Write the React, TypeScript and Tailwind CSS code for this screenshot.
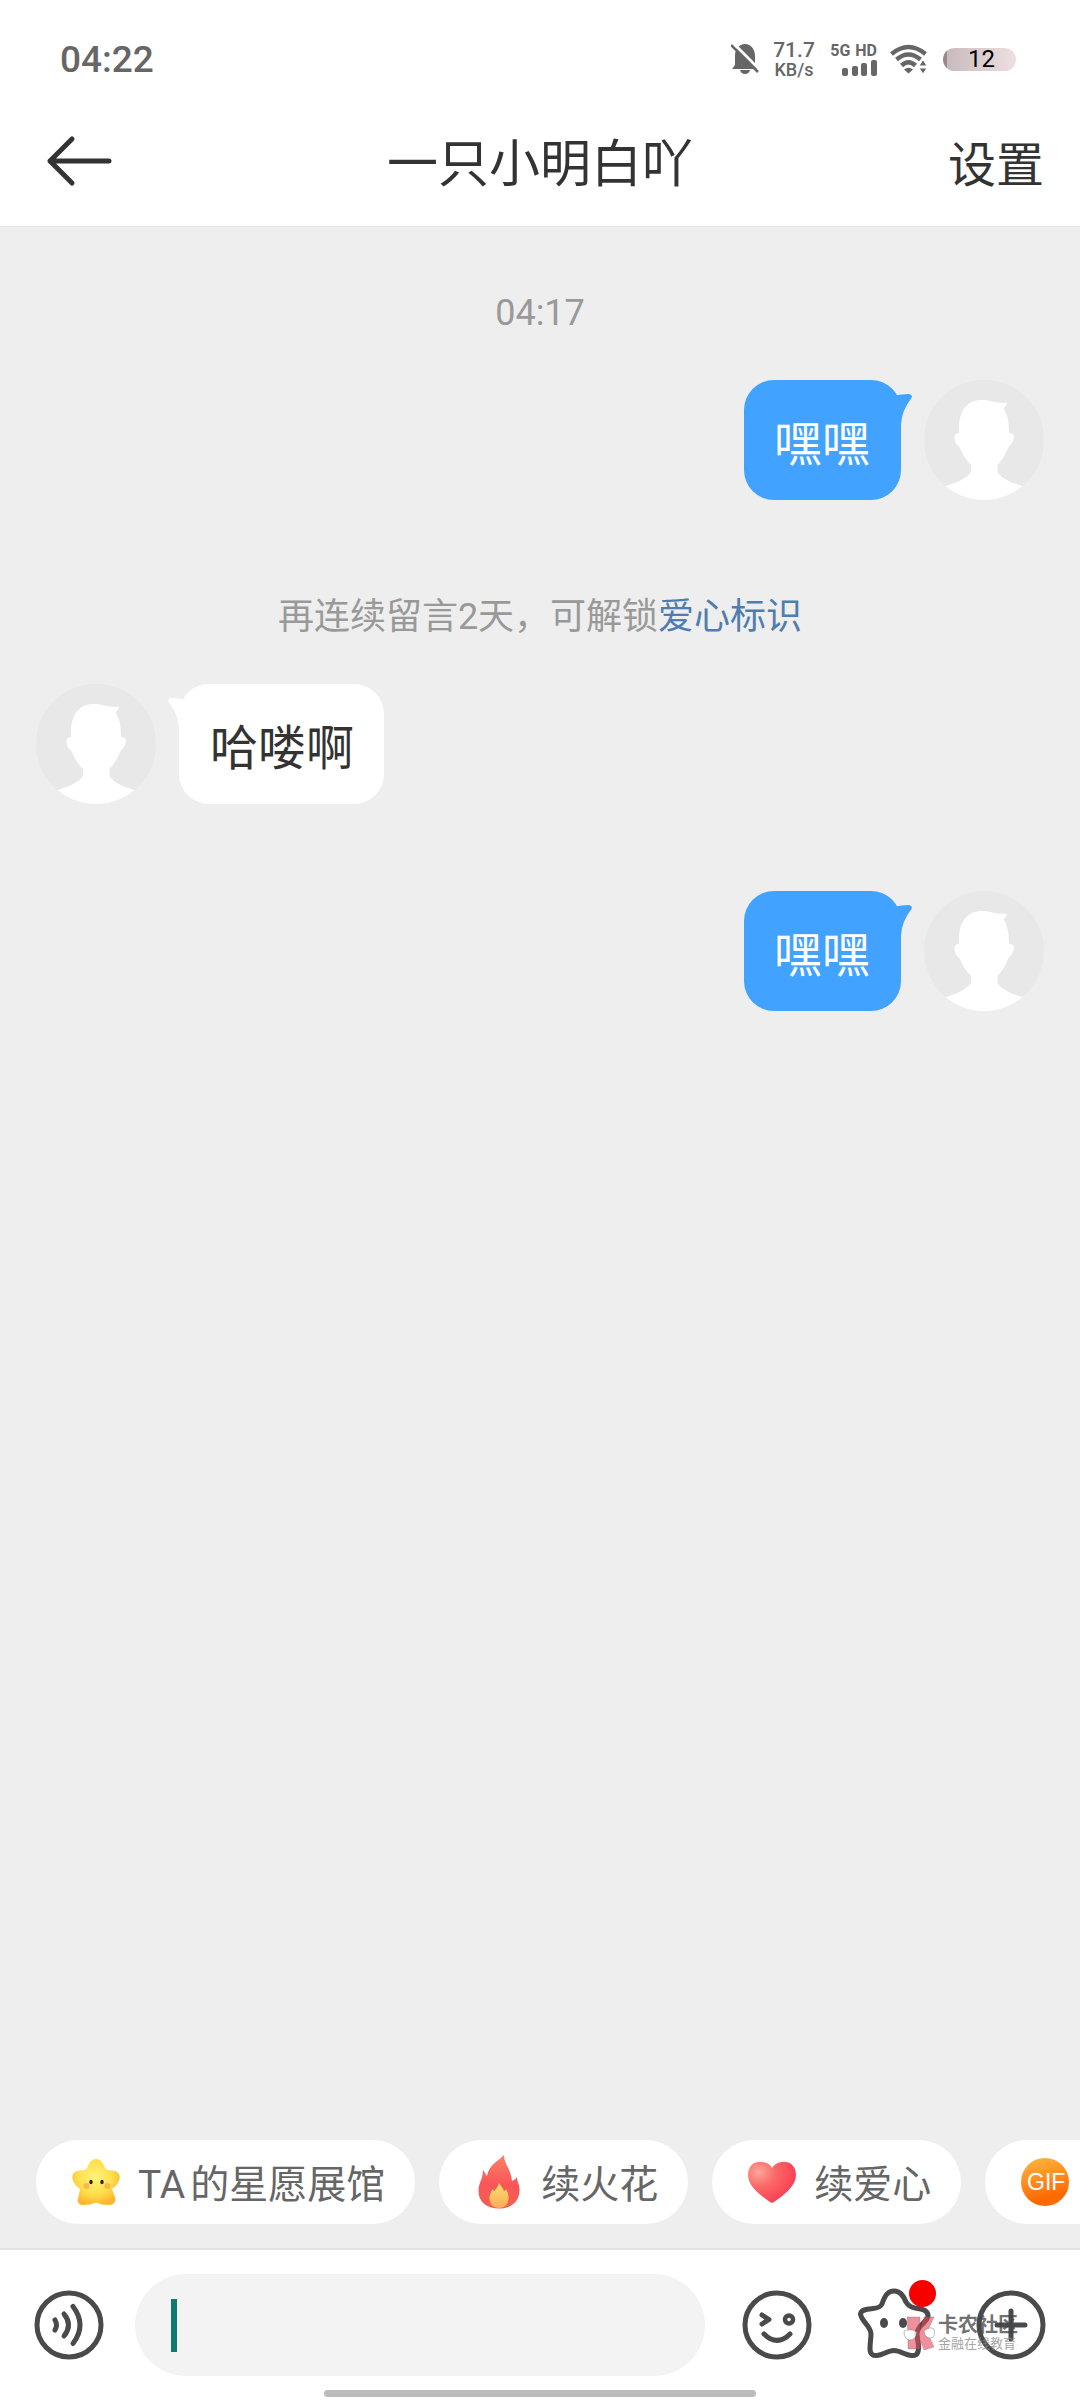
import { type ReactNode } from "react";

interface Message { id: number; text: string; mine: boolean; }

const FONT = "font-[Roboto,'Noto_Sans_CJK_SC',sans-serif]";

function Avatar() {
    return (
        <svg viewBox="0 0 120 120" className="size-[120px] shrink-0" role="img" aria-label="头像">
            <defs>
                <clipPath id="avatar-clip"><circle cx="60" cy="60" r="60" /></clipPath>
            </defs>
            <circle cx="60" cy="60" r="60" fill="#e8e8e8" />
            <path
                clipPath="url(#avatar-clip)"
                fill="#fff"
                d="M35 53C34 32 42 20 58 20C68 20 72 24 83 22.500C83 25 81 27 79.500 28.500C84 35 85 44 85 53C88 53 90 54 90 57C89 62 87 65 84.500 67C82 74 78 80 73.500 85V92C78 99 88 103 98 106V120H22V106C32 103 42 99 47 92V85C42 80 38 74 35.500 67C32 65 30.500 61 30.500 57C30.500 54 32 53 35 53Z"
            />
        </svg>
    );
}

function Bubble({ text, mine }: { text: string; mine: boolean }) {
    return (
        <div className={mine ? "relative rounded-[30px] bg-[#42a2ff] pr-[31px] pl-[30px] text-white" : "relative rounded-[30px] bg-white pr-[30px] pl-[31px] text-[#333]"}>
            <svg
                viewBox="0 0 30 40"
                className={mine ? "absolute top-[14px] -right-[11px] h-10 w-[30px] text-[#42a2ff]" : "absolute top-[14px] -left-[11px] h-10 w-[30px] -scale-x-100 text-white"}
                aria-hidden="true"
            >
                <path fill="currentColor" d="M0 0L12 1.500Q20 0 27 0Q31 1 29.500 4Q20 16 19 30L0 34Z" />
            </svg>
            <p className="relative pt-[30px] pb-5 text-[48px] leading-[70px]">{text}</p>
        </div>
    );
}

function MessageRow({ message }: { message: Message }) {
    return (
        <div className={message.mine ? "flex flex-row-reverse gap-[23px] px-9" : "flex gap-[23px] px-9"}>
            <Avatar />
            <Bubble text={message.text} mine={message.mine} />
        </div>
    );
}

function StatusBar() {
    return (
        <div className="flex h-[118px] items-center justify-between pr-16 pl-[60px] text-[#666]">
            <time className="pt-[2px] text-[37px] leading-[42px] font-medium">04:22</time>
            <div className="flex items-center">
                <svg viewBox="0 0 28 32" className="mr-[14px] h-8 w-7" fill="none" aria-label="静音">
                    <path fill="#666" d="M4 13C4 6 8 1 14 1S24 6 24 13V22L27 26H1L4 22ZM9 27H19Q18 31 14 31T9 27Z" />
                    <path stroke="#fff" strokeWidth="3" d="M2 0L29 27" />
                    <path stroke="#666" strokeWidth="2.500" d="M0 2L27 29" />
                </svg>
                <div className="flex w-[42px] flex-col items-center pt-px text-[18px] leading-5 font-medium">
                    <span className="text-[21px]">71.7</span>
                    <span>KB/s</span>
                </div>
                <div className="ml-[14px] flex w-12 flex-col items-end">
                    <div className="flex gap-[5px] text-[16px] leading-[18px] font-bold whitespace-nowrap">
                        <span>5G</span>
                        <span>HD</span>
                    </div>
                    <svg viewBox="0 0 36 16" className="h-4 w-9" fill="#666" aria-label="信号">
                        <rect x="1" y="8" width="6" height="8" rx="2" />
                        <rect x="11" y="6" width="6" height="10" rx="2" />
                        <rect x="20" y="3" width="6" height="13" rx="2" />
                        <rect x="30" y="0" width="6" height="16" rx="2" />
                    </svg>
                </div>
                <svg viewBox="0 0 38 30" className="ml-[13px] h-[30px] w-[38px]" fill="none" stroke="#666" strokeWidth="4.500" aria-label="无线网络">
                    <path d="M1.500 10Q18.500-4 35.500 10" />
                    <path d="M6.500 15.500Q18.500 5.500 30.500 15.500" />
                    <path d="M11.500 21.500Q18.500 15 25.500 21.500" />
                    <path fill="#666" stroke="none" d="M14 25.500Q18.500 22 23 25.500L18.500 29.500Z" />
                    <path fill="#666" stroke="#fff" strokeWidth="1" d="M29 22L33 15.500L37 22ZM29 24H37L33 30Z" />
                </svg>
                <div className="ml-[15px] h-[23px] w-[73px] rounded-full bg-linear-to-r from-[#97878a] from-5% via-[#c9bbbd] via-5% to-[#eee0e1] pl-1 text-center text-[24px] leading-[23px] text-black">12</div>
            </div>
        </div>
    );
}

function Chip({ icon, label, children }: { icon: ReactNode; label?: string; children?: ReactNode }) {
    return (
        <button type="button" aria-label={label} className="flex h-[84px] shrink-0 items-center gap-[18px] rounded-full bg-white pr-[30px] pl-9 text-[39px] leading-[56px] whitespace-nowrap text-[#666]">
            {icon}
            <span className="min-w-12 pt-[6px]">{children}</span>
        </button>
    );
}

function StarIcon() {
    return (
        <svg viewBox="0 0 48 48" className="size-12" aria-hidden="true">
            <defs>
                <radialGradient id="star-fill" cx=".48" cy=".4" r=".6">
                    <stop offset="0" stopColor="#fff47a" />
                    <stop offset=".6" stopColor="#ffdf4d" />
                    <stop offset="1" stopColor="#fbb62f" />
                </radialGradient>
            </defs>
            <path fill="url(#star-fill)" d="M15 10Q18 1 24 1T33 10Q34 12 41 12.500Q49 14 47.500 21Q46 27 40 31Q42 36 43.500 41Q43 47 37 47Q30 47 24 44.500Q18 47 11 47Q5 47 6 41Q7 36 8 31Q2 27 .5 21Q-1 14 7 12.500Q14 12 15 10Z" />
            <circle cx="14.500" cy="28" r="3" fill="#f9b84a" />
            <circle cx="35.500" cy="28" r="3" fill="#f9b84a" />
            <ellipse cx="19" cy="24" rx="1.700" ry="2.300" fill="#2d2007" />
            <ellipse cx="30" cy="24" rx="1.700" ry="2.300" fill="#2d2007" />
        </svg>
    );
}

function FireIcon() {
    return (
        <svg viewBox="0 0 48 54" className="h-[54px] w-12" aria-hidden="true">
            <defs>
                <linearGradient id="fire-outer" x1="0" y1="0" x2="0" y2="1">
                    <stop offset="0" stopColor="#fb8266" />
                    <stop offset=".55" stopColor="#fa5659" />
                    <stop offset="1" stopColor="#f3604c" />
                </linearGradient>
                <linearGradient id="fire-inner" x1="0" y1="0" x2="0" y2="1">
                    <stop offset="0" stopColor="#ffe36a" />
                    <stop offset="1" stopColor="#f9a95b" />
                </linearGradient>
            </defs>
            <path fill="url(#fire-outer)" d="M29 0C29 9 36 14 37 26C39 25 41 24 42 22C42 27 45 30 44.500 36C44 47 36 53.500 24 53.500C11 53.500 3 46 3.500 35C4 27 8 24 8 15C10 17 10 19 12 21C14 10 22 7 29 0Z" />
            <path fill="url(#fire-inner)" d="M24 28C26 31 28 33 29 36C30 36 31 35 31 34C33 38 34 41 33.500 44C33 50 29 53 24 53S15 50 14.500 44C14 41 16 37 17.500 34C18 35 19 36 19.500 36C21 34 23 31 24 28Z" />
        </svg>
    );
}

function HeartIcon() {
    return (
        <svg viewBox="0 0 48 48" className="size-12" aria-hidden="true">
            <defs>
                <radialGradient id="heart-fill" cx=".22" cy=".25" r=".85">
                    <stop offset="0" stopColor="#ffa79b" />
                    <stop offset=".4" stopColor="#fb6a68" />
                    <stop offset="1" stopColor="#f93a50" />
                </radialGradient>
            </defs>
            <path fill="url(#heart-fill)" d="M24 10C28 4 33 4 37 4C44 4 48 10 48 17C48 28 36 37 26 44Q24 45.500 22 44C12 37 0 28 0 17C0 10 4 4 11 4C17 4 21 5 24 10Z" />
        </svg>
    );
}

function GifIcon() {
    return (
        <span className="flex size-12 items-center justify-center rounded-full bg-linear-165 from-[#ffb83c] to-[#ff6a00] to-75% pl-[2px] font-['Liberation_Sans',sans-serif] text-[23px] leading-6 text-white">GIF</span>
    );
}

function Watermark() {
    return (
        <div className="pointer-events-none absolute top-16 right-[62px] flex items-center gap-[3px] opacity-75" aria-hidden="true">
            <svg viewBox="0 0 32 36" className="h-9 w-8">
                <path fill="#e5475a" fillOpacity=".8" stroke="#555" strokeOpacity=".4" d="M4 2H17V14L21 2H31L24 17L31 32L21 35L17 25V34H5V20Z" />
                <path fill="#fff" stroke="#555" strokeOpacity=".5" d="M1 16Q8 13 14 17Q13 25 7 25T1 16ZM21 16Q27 11 31 14Q33 23 27 23Q22 23 21 16Z" />
            </svg>
            <div className="whitespace-nowrap">
                <div className="text-[20px] leading-[22px] font-bold text-[#444]">卡农社区</div>
                <div className="text-[13px] leading-4 text-[#888]">金融在线教育</div>
            </div>
        </div>
    );
}

function Composer() {
    return (
        <form className="relative border-t-2 border-[#e2e2e2] bg-white pt-6">
            <div className="flex h-[102px] items-center px-[33px]">
                <button type="button" aria-label="语音" className="shrink-0">
                    <svg viewBox="0 0 72 72" className="size-[72px]" fill="none" stroke="#4a4a4a" strokeWidth="5" strokeLinecap="round">
                        <circle cx="36" cy="36" r="32" />
                        <path d="M22 31Q25 36 22 41M31 25Q40 36 31 47M40 17.500Q54 36 40 54.500" />
                    </svg>
                </button>
                <label className="ml-[30px] flex h-[102px] min-w-0 flex-1 items-center rounded-full bg-[#f3f3f3] px-9">
                    <span className="h-[53px] w-[6px] bg-[#0f7b6f]" />
                    <input type="text" aria-label="消息" className="min-w-0 flex-1 bg-transparent text-[42px] outline-none" />
                </label>
                <button type="button" aria-label="表情" className="ml-9 shrink-0">
                    <svg viewBox="0 0 72 72" className="size-[72px]" fill="none" stroke="#4a4a4a" strokeWidth="5" strokeLinecap="round" strokeLinejoin="round">
                        <circle cx="36" cy="36" r="32" />
                        <path d="M21 26L28 30.500L21 35M23 45Q36 58 49 45" />
                        <circle cx="48" cy="30.500" r="4" strokeWidth="4.500" />
                    </svg>
                </button>
                <button type="button" aria-label="星愿" className="relative ml-[43px] shrink-0">
                    <svg viewBox="0 0 76 76" className="size-[76px]" fill="none" stroke="#4a4a4a" strokeWidth="5" strokeLinejoin="round">
                        <path d="M26 17C29 8 32 4 38 4S47 8 50 15Q53 20 59 21C68 22 72 24 72 29C72 35 61 38 61 47C61 52 63 56 62.500 62C62 68 59 69 55 68.500C49 68 44 63.500 38 63.500S27 68 21 68.500C17 69 14 67 14 62C14 56 15 51 15 47C15 39 5 34 4.500 27C5 22 12 22 17 21.500Q24 21 26 17Z" />
                        <ellipse cx="28" cy="36" rx="4" ry="5" fill="#4a4a4a" stroke="none" />
                        <ellipse cx="47" cy="36" rx="4" ry="5" fill="#4a4a4a" stroke="none" />
                    </svg>
                    <span className="absolute -top-[7px] -right-1 size-[27px] rounded-full bg-[#f60000]" />
                </button>
                <button type="button" aria-label="更多" className="ml-[43px] shrink-0">
                    <svg viewBox="0 0 72 72" className="size-[72px]" fill="none" stroke="#4a4a4a" strokeWidth="5" strokeLinecap="round">
                        <circle cx="36" cy="36" r="32" />
                        <path d="M36 22V50M22 36H50" />
                    </svg>
                </button>
            </div>
            <div className="mx-auto mt-[14px] mb-[3px] h-[7px] w-2/5 rounded-full bg-[#bcbcbc]" />
            <Watermark />
        </form>
    );
}

export default function App() {
    return (
        <div className={`flex min-h-screen flex-col bg-[#eee] ${FONT}`} lang="zh-CN">
            <header className="border-b border-[#e4e4e4] bg-white">
                <StatusBar />
                <div className="grid h-[108px] grid-cols-[1fr_auto_1fr] items-start px-9 text-[#333]">
                    <a href="#back" aria-label="返回" className="mt-4 ml-[10px] w-fit">
                        <svg viewBox="0 0 66 54" className="h-[54px] w-[66px]" fill="none" stroke="#333" strokeWidth="5" strokeLinecap="round" strokeLinejoin="round">
                            <path d="M26 5L4 27L26 49M4 27H63" />
                        </svg>
                    </a>
                    <h1 className="text-[51px] leading-[94px]">一只小明白吖</h1>
                    <button type="button" className="justify-self-end text-[48px] leading-[96px]">设置</button>
                </div>
            </header>

            <main className="flex-1">
                <p className="pt-[65px] text-center text-[36px] leading-[42px] text-[#999]">04:17</p>
                <div className="mt-[46px]"><MessageRow message={{ id: 1, text: "嘿嘿", mine: true }} /></div>
                <p className="mt-[91px] text-center text-[36px] leading-[52px] text-[#999]">再连续留言2天，可解锁<a href="#badge" className="text-[#507daf]">爱心标识</a></p>
                <div className="mt-[41px]"><MessageRow message={{ id: 2, text: "哈喽啊", mine: false }} /></div>
                <div className="mt-[87px]"><MessageRow message={{ id: 3, text: "嘿嘿", mine: true }} /></div>
            </main>

            <nav aria-label="快捷功能" className="flex gap-6 overflow-hidden pb-6 pl-9">
                <Chip icon={<StarIcon />}><span className="mr-[5px]">TA</span>的星愿展馆</Chip>
                <Chip icon={<FireIcon />}>续火花</Chip>
                <Chip icon={<HeartIcon />}>续爱心</Chip>
                <Chip icon={<GifIcon />} label="动图" />
            </nav>
            <Composer />
        </div>
    );
}
